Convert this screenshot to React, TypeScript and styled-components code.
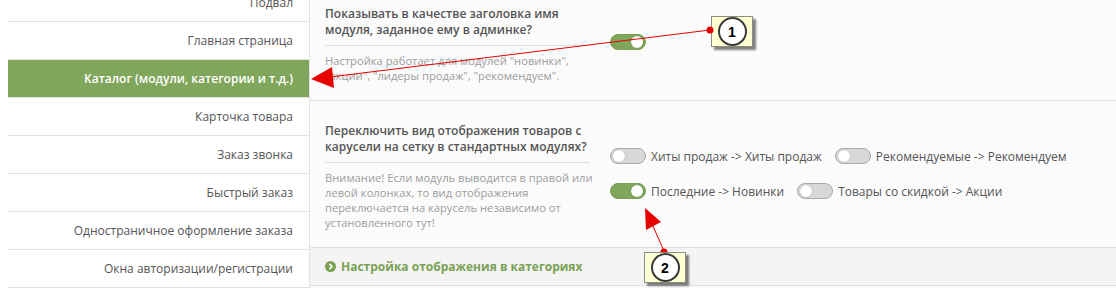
import React from 'react';
import styled, { createGlobalStyle } from 'styled-components';

interface Option {
  id: string;
  label: string;
  enabled: boolean;
}

const menuItems = [
  'Подвал',
  'Главная страница',
  'Каталог (модули, категории и т.д.)',
  'Карточка товара',
  'Заказ звонка',
  'Быстрый заказ',
  'Одностраничное оформление заказа',
  'Окна авторизации/регистрации',
];

const viewOptions: Option[] = [
  { id: 'bestseller', label: 'Хиты продаж -> Хиты продаж', enabled: false },
  { id: 'featured', label: 'Рекомендуемые -> Рекомендуем', enabled: false },
  { id: 'latest', label: 'Последние -> Новинки', enabled: true },
  { id: 'special', label: 'Товары со скидкой -> Акции', enabled: false },
];

const GlobalStyle = createGlobalStyle`
  html, body {
    margin: 0;
    padding: 0;
    background: #ffffff;
  }
  body {
    font-family: 'Open Sans', 'Liberation Sans', sans-serif;
    overflow: hidden;
  }
`;

const Viewport = styled.div`
  position: relative;
  width: 1116px;
  height: 293px;
  overflow: hidden;
  background: #ffffff;
`;

// page is scrolled a little, so the first row is cut at the top
const Layout = styled.div`
  display: flex;
  margin-top: -16px;
  padding-left: 8px;
`;

const Sidebar = styled.nav`
  width: 301px;
  flex-shrink: 0;
  border-right: 1px solid #e2e2e2;
  background: #ffffff;
`;

const NavItem = styled.div<{ $active?: boolean }>`
  height: 37px;
  display: flex;
  align-items: center;
  justify-content: flex-end;
  padding-right: 16px;
  border-bottom: 1px solid #e2e2e2;
  font-size: 12px;
  font-weight: ${(p) => (p.$active ? 600 : 400)};
  color: ${(p) => (p.$active ? '#ffffff' : '#555555')};
  background: ${(p) => (p.$active ? '#7fa65b' : 'transparent')};
`;

const Main = styled.main`
  flex: 1;
  background: #fbfbfb;
`;

const Section = styled.section`
  display: grid;
  grid-template-columns: 265px 1fr;
  column-gap: 20px;
  padding: 22px 15px 17px;
  border-bottom: 1px solid #e0e0e0;
`;

const Info = styled.div`
  display: flex;
  flex-direction: column;
`;

const Title = styled.div`
  font-size: 12px;
  font-weight: 600;
  line-height: 16px;
  color: #555555;
  padding-bottom: 7px;
  border-bottom: 1px solid #dddddd;
`;

const Hint = styled.div`
  margin-top: 7px;
  font-size: 11.2px;
  line-height: 15px;
  color: #9d9d9d;
  white-space: nowrap;
`;

const Controls = styled.div`
  align-self: center;
  margin-bottom: 6px;
  display: flex;
  flex-wrap: wrap;
  column-gap: 13px;
  row-gap: 18px;
`;

const ToggleLabel = styled.label`
  display: flex;
  align-items: center;
  gap: 5px;
  font-size: 12px;
  color: #555555;
`;

const Switch = styled.span<{ $on: boolean }>`
  position: relative;
  display: inline-block;
  width: 34px;
  height: 14px;
  border-radius: 9px;
  border: 1px solid ${(p) => (p.$on ? '#78a053' : '#a9a9a9')};
  background: ${(p) => (p.$on ? '#7fa65b' : '#d8d8d8')};

  &::after {
    content: '';
    position: absolute;
    top: 1px;
    left: ${(p) => (p.$on ? '20px' : '2px')};
    width: 12px;
    height: 12px;
    border-radius: 50%;
    background: #ffffff;
    box-shadow: 0 0 1px rgba(0, 0, 0, 0.35);
  }
`;

const CollapseBar = styled.div`
  height: 37px;
  display: flex;
  align-items: center;
  gap: 5px;
  padding-left: 15px;
  background: #f4f4f4;
  border-bottom: 1px solid #e0e0e0;
  color: #7aa154;
  font-size: 12px;
  font-weight: 700;
`;

const Callout = styled.div<{ $x: number; $y: number }>`
  position: absolute;
  left: ${(p) => p.$x}px;
  top: ${(p) => p.$y}px;
  width: 40px;
  height: 29px;
  background: #ffffd4;
  border: 1px solid #8d8d80;
  box-shadow: 3px 3px 2px rgba(0, 0, 0, 0.5);
  display: flex;
  align-items: center;
  justify-content: center;
`;

const Badge = styled.span`
  width: 25px;
  height: 25px;
  border-radius: 50%;
  border: 2px solid #3a3a3a;
  background: #ffffff;
  display: flex;
  align-items: center;
  justify-content: center;
  font-family: 'Liberation Sans', Arial, sans-serif;
  font-size: 14px;
  font-weight: 700;
  color: #000000;
`;

const Overlay = styled.svg`
  position: absolute;
  left: 0;
  top: 0;
  pointer-events: none;
`;

const ChevronCircle = () => (
  <svg width="11" height="11" viewBox="0 0 12 12">
    <circle cx="6" cy="6" r="6" fill="#7aa154" />
    <path d="M4.8 3.2 L7.6 6 L4.8 8.8" stroke="#ffffff" strokeWidth="1.8" fill="none" />
  </svg>
);

const Toggle: React.FC<{ on: boolean; label?: string }> = ({ on, label }) => (
  <ToggleLabel>
    <Switch $on={on} />
    {label}
  </ToggleLabel>
);

const App: React.FC = () => {
  return (
    <Viewport>
      <GlobalStyle />
      <Layout>
        <Sidebar>
          {menuItems.map((item, i) => (
            <NavItem key={item} $active={i === 2}>
              {item}
            </NavItem>
          ))}
        </Sidebar>
        <Main>
          <Section>
            <Info>
              <Title>
                Показывать в качестве заголовка имя
                <br />
                модуля, заданное ему в админке?
              </Title>
              <Hint>
                Настройка работает для модулей "новинки",
                <br />
                "акции", "лидеры продаж", "рекомендуем".
              </Hint>
            </Info>
            <Controls>
              <Toggle on />
            </Controls>
          </Section>
          <Section>
            <Info>
              <Title>
                Переключить вид отображения товаров с
                <br />
                карусели на сетку в стандартных модулях?
              </Title>
              <Hint>
                Внимание! Если модуль выводится в правой или
                <br />
                левой колонках, то вид отображения
                <br />
                переключается на карусель независимо от
                <br />
                установленного тут!
              </Hint>
            </Info>
            <Controls>
              {viewOptions.map((opt) => (
                <Toggle key={opt.id} on={opt.enabled} label={opt.label} />
              ))}
            </Controls>
          </Section>
          <CollapseBar>
            <ChevronCircle />
            Настройка отображения в категориях
          </CollapseBar>
        </Main>
      </Layout>

      <Callout $x={711} $y={16}>
        <Badge>1</Badge>
      </Callout>
      <Callout $x={644} $y={252}>
        <Badge>2</Badge>
      </Callout>

      <Overlay width="1116" height="293">
        <line x1="710" y1="30" x2="330" y2="77" stroke="#e60000" strokeWidth="1" />
        <polygon points="311,79 332,67 334,88" fill="#e60000" />
        <circle cx="710" cy="30" r="3.5" fill="#e60000" />
        <line x1="664" y1="251" x2="652" y2="224" stroke="#e60000" strokeWidth="1" />
        <polygon points="645,208 661,222 646,230" fill="#e60000" />
        <path d="M660.5 252 A3.5 3.5 0 0 1 667.5 252 Z" fill="#e60000" />
      </Overlay>
    </Viewport>
  );
};

export default App;
